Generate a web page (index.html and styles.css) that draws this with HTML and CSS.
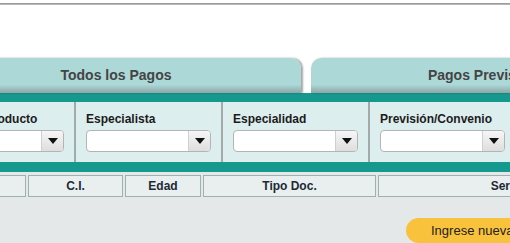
FILE: index.html
```html
<!DOCTYPE html>
<html lang="es">
<head>
    <meta charset="UTF-8">
    <meta name="viewport" content="width=device-width, initial-scale=1.0">
    <title>Pagos</title>
    <link rel="stylesheet" href="styles.css">
</head>
<body>
    <div class="head">
        <div class="rule"></div>
    </div>

    <div class="tabs">
        <div class="tab">Todos los Pagos</div>
        <div class="tab">Pagos Previsionales</div>
    </div>

    <div class="band"></div>
    <div class="filters">
        <div class="filter">
            <div class="label">Tipo de Producto</div>
            <div class="select"><span class="arrow"></span></div>
        </div>
        <div class="filter">
            <div class="label">Especialista</div>
            <div class="select"><span class="arrow"></span></div>
        </div>
        <div class="filter">
            <div class="label">Especialidad</div>
            <div class="select"><span class="arrow"></span></div>
        </div>
        <div class="filter">
            <div class="label">Previsión/Convenio</div>
            <div class="select"><span class="arrow"></span></div>
        </div>
    </div>
    <div class="band band-low"></div>

    <div class="columns">
        <div class="col col-name">Nombre</div>
        <div class="col col-ci">C.I.</div>
        <div class="col col-age">Edad</div>
        <div class="col col-doc">Tipo Doc.</div>
        <div class="col col-serv">Servicio</div>
    </div>

    <div class="actions">
        <div class="btn">Ingrese nueva atención</div>
    </div>
</body>
</html>
```

FILE: styles.css
```css
body {
    margin: 0;
    overflow: hidden;
    font-family: "Liberation Sans", Arial, sans-serif;
    background: #e4e8e8;
    color: #222;
}
.head {
    height: 58px;
    background: #fff;
    padding-top: 3px;
    box-sizing: border-box;
}
.rule {
    height: 2px;
    background: linear-gradient(to bottom, #8e8e8e, #c4c4c4);
}
.tabs {
    display: flex;
    gap: 10px;
    margin-left: -69px;
    background: #fff;
    height: 35px;
}
.tab {
    flex: 0 0 370px;
    height: 35px;
    line-height: 35px;
    text-align: center;
    font-size: 14px;
    font-weight: bold;
    color: #444;
    border-radius: 10px 10px 0 0;
    background: linear-gradient(to bottom, #acd8d8 0, #acd8d8 76%, #8fa6a6 100%);
    box-shadow: 2px 0 2px rgba(0, 0, 0, 0.35);
}
.band {
    height: 9px;
    background: #15998f;
}
.band-low {
    height: 10px;
}
.filters {
    display: flex;
    margin-left: -71px;
    background: #ddeeee;
}
.filter {
    flex: 0 0 147px;
    padding: 10px 0 10px 10px;
    box-sizing: border-box;
    border-right: 2px solid #a2aaaa;
}
.label {
    font-size: 12px;
    font-weight: bold;
    line-height: 15px;
    white-space: nowrap;
    color: #1c1c1c;
}
.select {
    margin-top: 3px;
    width: 125px;
    height: 22px;
    box-sizing: border-box;
    border: 1px solid #b4b4b4;
    border-radius: 4px;
    background: #fff;
    display: flex;
    justify-content: flex-end;
    overflow: hidden;
}
.arrow {
    width: 21px;
    border-left: 1px solid #d0d0d0;
    background: linear-gradient(to bottom, #f6f6f6, #dedede);
    display: flex;
    align-items: center;
    justify-content: center;
}
.arrow::after {
    content: "";
    border-left: 5px solid transparent;
    border-right: 5px solid transparent;
    border-top: 6px solid #111;
}
.columns {
    display: flex;
    gap: 2px;
    margin: 3px 0 0 -94px;
}
.col {
    flex: 0 0 auto;
    height: 22px;
    line-height: 20px;
    box-sizing: border-box;
    border: 1px solid #9fb0b0;
    background: #e9eeee;
    text-align: center;
    font-size: 12px;
    font-weight: bold;
    color: #1d2a36;
}
.col-name { width: 120px; }
.col-ci { width: 95px; }
.col-age { width: 76px; }
.col-doc { width: 173px; }
.col-serv { width: 272px; }
.actions {
    display: flex;
    padding-left: 406px;
    margin-top: 21px;
}
.btn {
    flex: 0 0 200px;
    height: 25px;
    line-height: 25px;
    padding-left: 25px;
    border-radius: 13px;
    background: #f9c23c;
    font-size: 13px;
    color: #222;
    white-space: nowrap;
}
```
